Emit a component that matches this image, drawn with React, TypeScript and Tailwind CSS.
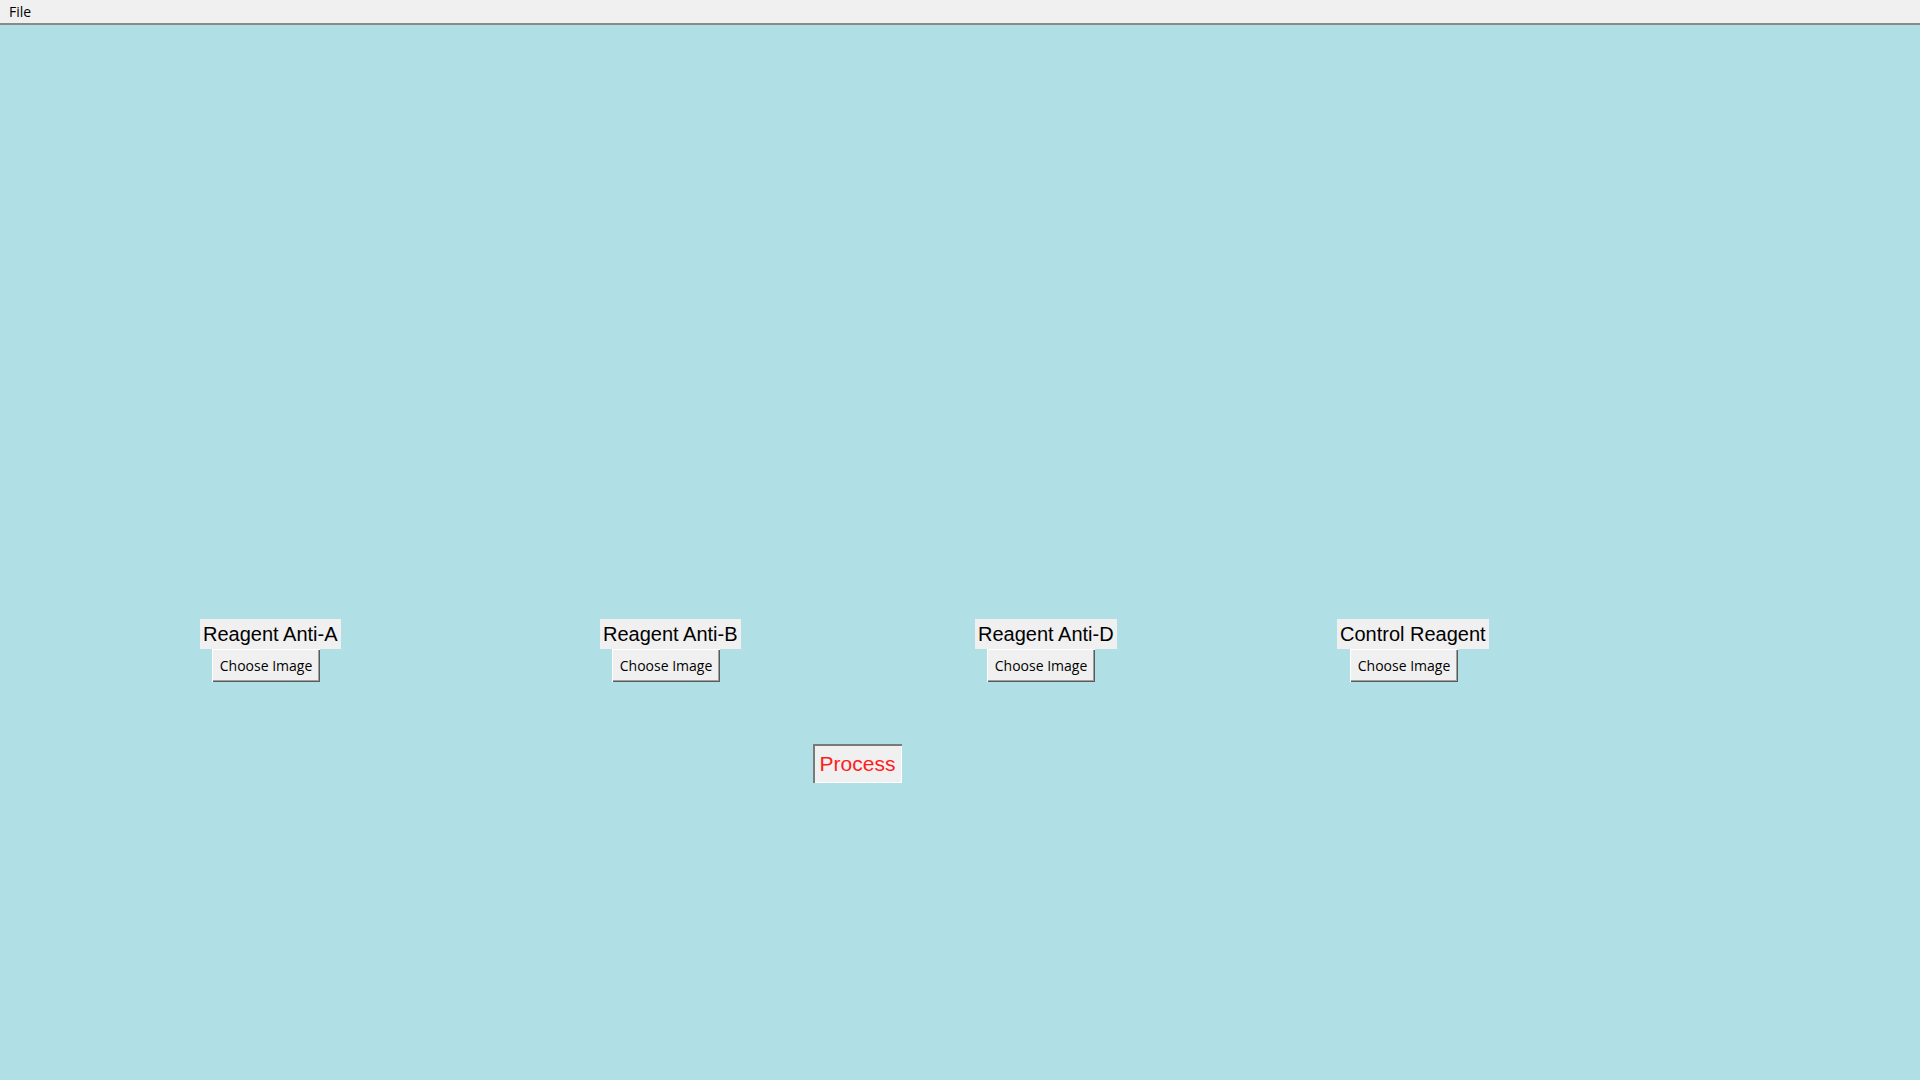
const COLUMNS = [
  { label: "Reagent Anti-A", width: "w-[400px]", btnOffset: "ml-[12px]" },
  { label: "Reagent Anti-B", width: "w-[375px]", btnOffset: "ml-[12px]" },
  { label: "Reagent Anti-D", width: "w-[362px]", btnOffset: "ml-[12px]" },
  { label: "Control Reagent", width: "w-[160px]", btnOffset: "ml-[13px]" },
];

function ChooseButton({ className }: { className: string }) {
  return (
    <button
      className={`${className} w-[108px] h-[33px] bg-[#f0f0f0] text-black text-[14px] font-['Open_Sans',sans-serif] shadow-[inset_1px_1px_#ffffff,inset_-1px_-1px_#5a5a5a,inset_-2px_-2px_#a0a0a0] flex items-center justify-center`}>
      Choose Image
    </button>
  );
}

export default function App() {
  return (
    <div className="w-[1920px] h-[1080px] bg-[#b0dfe5] flex flex-col overflow-hidden">
      <header className="h-[25px] bg-[#f0f0f0] border-b-2 border-[#8a8a8a] flex items-center pl-[9px]">
        <span className="text-[14px] text-black font-['Open_Sans',sans-serif] leading-none">
          File
        </span>
      </header>

      <main className="flex flex-col pt-[594px]">
        <div className="flex pl-[200px]">
          {COLUMNS.map(({ label, width, btnOffset }) => (
            <div key={label} className={`${width} flex flex-col items-start`}>
              <span className="h-[30px] px-[3px] bg-[#f0f0f0] flex items-center text-[20px] text-black font-['Liberation_Sans',Arial,sans-serif] whitespace-nowrap">
                {label}
              </span>
              <ChooseButton className={btnOffset} />
            </div>
          ))}
        </div>

        <div className="pl-[813px] pt-[62px]">
          <button className="w-[89px] h-[39px] bg-[#f0f0f0] text-[#ff1c1c] text-[21px] font-['Liberation_Sans',Arial,sans-serif] shadow-[inset_2px_2px_#7a7a7a,inset_-1px_-1px_#ffffff] flex items-center justify-center">
            Process
          </button>
        </div>
      </main>
    </div>
  );
}
